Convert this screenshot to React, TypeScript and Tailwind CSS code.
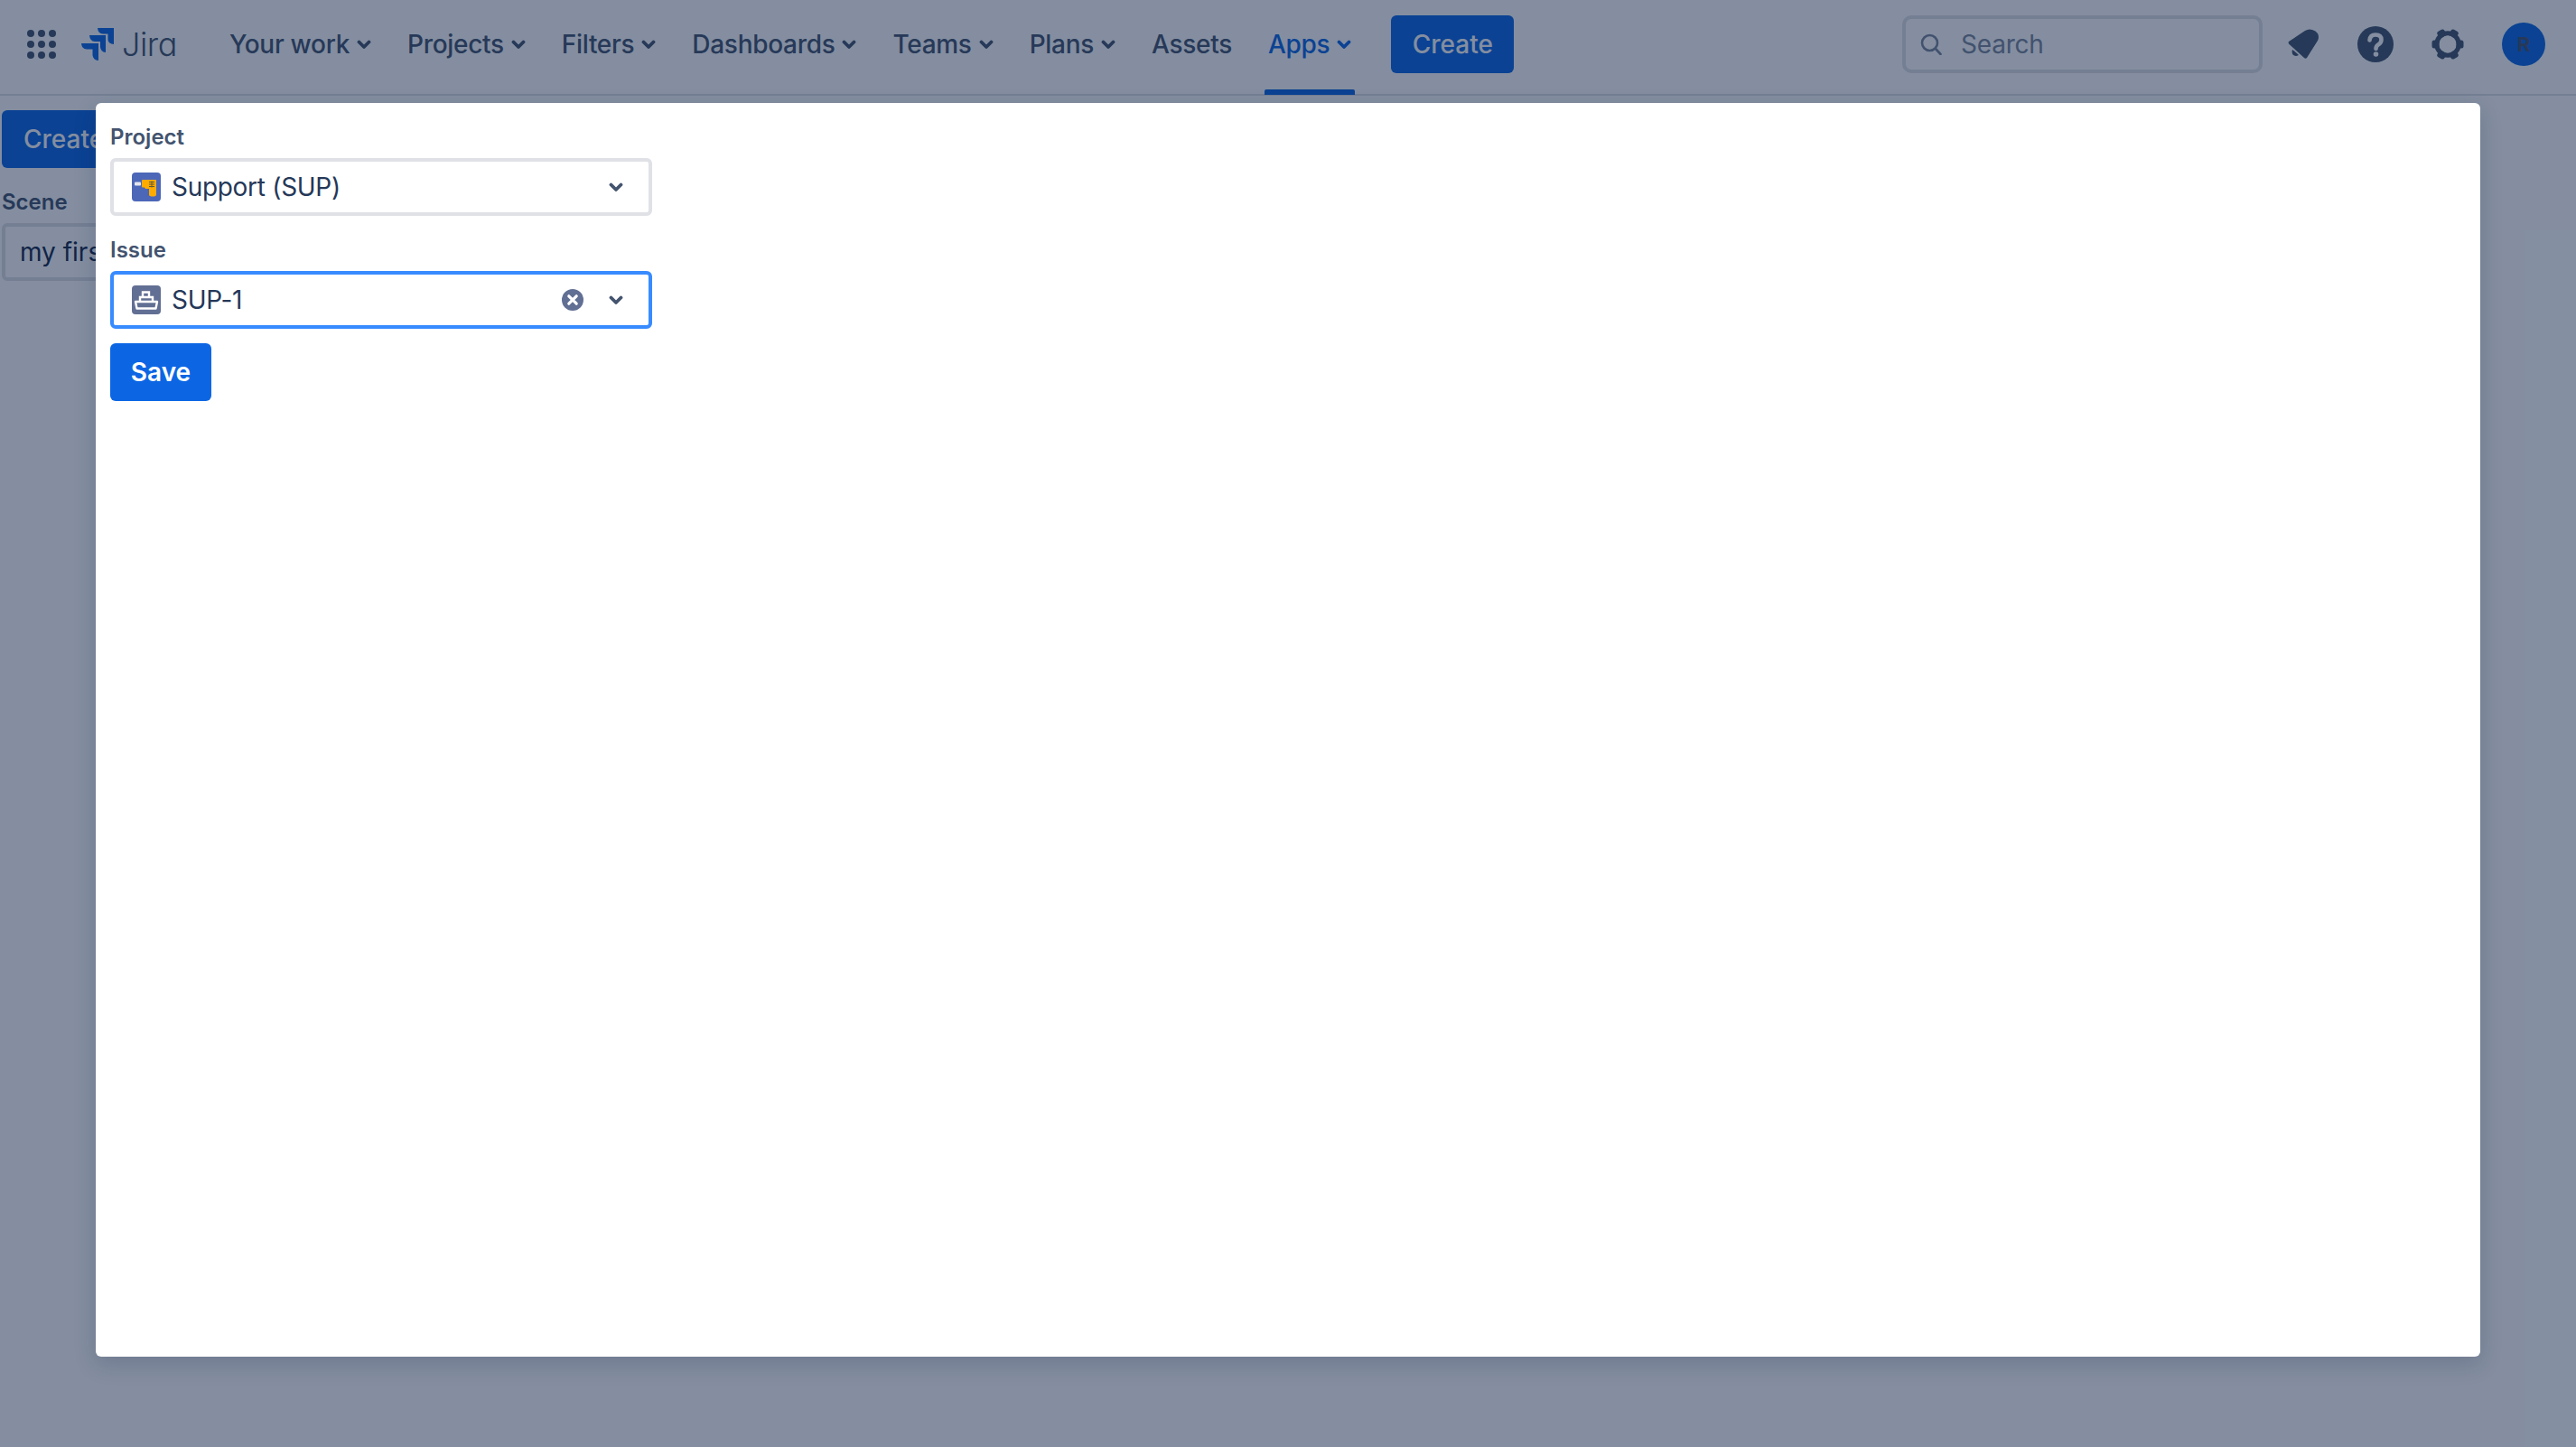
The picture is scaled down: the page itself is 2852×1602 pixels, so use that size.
import React from "react";

const Chevron = ({ className = "text-[#44546F]" }: { className?: string }) => (
  <svg width="16" height="16" viewBox="0 0 16 16" className={`shrink-0 ${className}`} fill="none">
    <path d="M2.5 5.5 L8 11 L13.5 5.5" stroke="currentColor" strokeWidth="3.8" strokeLinecap="round" strokeLinejoin="round" />
  </svg>
);

const NavItem = ({ label, chevron = true, active = false }: { label: string; chevron?: boolean; active?: boolean }) => (
  <div className={`relative flex h-full items-center gap-2 px-1 text-[28px] font-medium tracking-[-0.3px] ${active ? "text-[#0C66E4]" : "text-[#44546F]"}`}>
    <span>{label}</span>
    {chevron && <Chevron className={active ? "text-[#0C66E4]" : "text-[#44546F]"} />}
    {active && <div className="absolute -bottom-[7px] left-0 right-0 h-[6px] rounded-t-[2px] bg-[#0C66E4]" />}
  </div>
);

const Dots = () => (
  <svg width="32" height="32" viewBox="0 0 32 32" fill="#44546F">
    {[4, 16, 28].map((y) => [4, 16, 28].map((x) => <circle key={`${x}-${y}`} cx={x} cy={y} r="4" />))}
  </svg>
);

const Logo = () => (
  <svg width="36" height="36" viewBox="0 0 36 36" fill="#0C66E4">
    <path d="M18 0 H36 V18 Q30 17.5 29.5 13 V6.5 H24 Q18.5 6 18 0 Z" />
    <path d="M9 8 H27 V27 Q21.5 26.5 21 21 V15 H15 Q9.5 14.5 9 8 Z" />
    <path d="M0 17 H19 V36 Q13 35.5 12.5 30 V23.5 H6 Q0.5 23 0 17 Z" />
  </svg>
);

const Bell = () => (
  <svg width="36" height="36" viewBox="0 0 36 36" fill="#44546F">
    <path d="M2 15 L20 3 Q24 0.5 28 2 Q32 3 34 6 Q36 10 34 14 L22 33 Q20.5 34.5 19 33 L2.5 18 Q1 16.5 2 15 Z" />
    <path d="M6 24 Q10 27 13 30 Q9 32 6.5 29.5 Q5 27 6 24 Z" />
  </svg>
);

const Help = () => (
  <svg width="40" height="40" viewBox="0 0 40 40">
    <circle cx="20" cy="20" r="20" fill="#44546F" />
    <path d="M13.5 15.5 Q14 9.5 20 9.5 Q26.5 9.5 26.5 15 Q26.5 18.5 23 20.5 Q20.5 22 20.5 25" fill="none" stroke="#FFFFFF" strokeWidth="4.6" strokeLinecap="round" />
    <circle cx="20.5" cy="31" r="2.8" fill="#FFFFFF" />
  </svg>
);

const Gear = () => (
  <svg width="36" height="36" viewBox="0 0 36 36">
    <g fill="#44546F">
      {[0, 60, 120, 180, 240, 300].map((a) => (
        <rect key={a} x="13.5" y="0.5" width="9" height="8" rx="2.5" transform={`rotate(${a + 30} 18 18)`} />
      ))}
    </g>
    <circle cx="18" cy="18" r="12.2" fill="none" stroke="#44546F" strokeWidth="5" />
  </svg>
);

const ProjectIcon = () => (
  <svg width="32" height="32" viewBox="0 0 32 32" className="shrink-0">
    <rect width="32" height="32" rx="4" fill="#4C67B8" />
    <rect x="3" y="10.5" width="7" height="4" rx="1" fill="#E3E6EC" />
    <path d="M11 9 Q11 8 12 8 H27 V24.5 Q27 26.5 23 26.5 Q19 26.5 19 24.5 V18 H15 L14 16.5 H12 Q11 16.5 11 15.5 Z" fill="#FFAB00" />
    <path d="M19 10.5 H25 M19 13 H25 M19 15.5 H25 M22 9.5 V16.5" stroke="#5E5A3A" strokeWidth="1" />
  </svg>
);

const IssueIcon = () => (
  <svg width="32" height="32" viewBox="0 0 32 32" className="shrink-0">
    <rect width="32" height="32" rx="4" fill="#626F94" />
    <path d="M4 18 H28 L26.5 25.5 H5.5 Z" fill="none" stroke="#FFFFFF" strokeWidth="2.4" strokeLinejoin="round" />
    <path d="M9 18 V13 H23 V18" fill="none" stroke="#FFFFFF" strokeWidth="2.4" />
    <path d="M12 13 V7.5 H19 V13" fill="none" stroke="#FFFFFF" strokeWidth="2.4" />
  </svg>
);

const Clear = () => (
  <svg width="24" height="24" viewBox="0 0 24 24" className="shrink-0">
    <circle cx="12" cy="12" r="12" fill="#626F94" />
    <path d="M7.8 7.8 L16.2 16.2 M16.2 7.8 L7.8 16.2" stroke="#FFFFFF" strokeWidth="3.2" strokeLinecap="round" />
  </svg>
);

const Select = ({
  focused = false,
  icon,
  value,
  clearable = false,
}: {
  focused?: boolean;
  icon: React.ReactNode;
  value: string;
  clearable?: boolean;
}) => (
  <div
    className={`flex h-16 w-[600px] items-center rounded-[6px] border-4 bg-white pl-5 pr-7 ${
      focused ? "border-[#388BFF]" : "border-[#DFE1E6]"
    }`}
  >
    {icon}
    <span className="ml-3 flex-1 text-[28px] tracking-[-0.3px] text-[#253858]">{value}</span>
    {clearable && (
      <div className="mr-[28px]">
        <Clear />
      </div>
    )}
    <Chevron />
  </div>
);

const Field = ({ label, children }: { label: string; children: React.ReactNode }) => (
  <div className="mt-[22px]">
    <div className="mb-[7px] text-[24px] font-semibold leading-8 text-[#44546F]">{label}</div>
    {children}
  </div>
);

export default function App() {
  return (
    <div className="relative h-[1602px] w-[2852px] overflow-hidden bg-white font-['Inter',sans-serif]">
      <header className="flex h-[106px] items-center border-b-2 border-[#DFE1E6] pb-[6px] pl-[30px]">
        <Dots />
        <div className="ml-7">
          <Logo />
        </div>
        <span className="ml-[9px] w-[60px] text-[36px] font-light leading-none tracking-[-0.5px] text-[#44546F] [font-feature-settings:'cv11']">
          Jira
        </span>
        <nav className="ml-[55px] flex h-full items-center gap-8 self-stretch">
          <NavItem label="Your work" />
          <NavItem label="Projects" />
          <NavItem label="Filters" />
          <NavItem label="Dashboards" />
          <NavItem label="Teams" />
          <NavItem label="Plans" />
          <NavItem label="Assets" chevron={false} />
          <NavItem label="Apps" active />
        </nav>
        <button className="ml-10 h-16 w-[136px] rounded-[6px] bg-[#0C66E4] text-[28px] font-medium text-white">Create</button>
        <div className="ml-auto flex h-16 w-[399px] items-center rounded-[10px] border-4 border-[#DFE1E6] bg-white pl-4">
          <svg width="24" height="24" viewBox="0 0 24 24" fill="none" stroke="#7A869A" strokeWidth="2.6" strokeLinecap="round">
            <circle cx="10.5" cy="10.5" r="8.5" />
            <path d="M17 17 L22.5 23" />
          </svg>
          <span className="ml-[21px] text-[28px] tracking-[-0.2px] text-[#7A869A]">Search</span>
        </div>
        <div className="ml-[5px] flex items-center">
          <div className="flex w-20 justify-center"><Bell /></div>
          <div className="flex w-20 justify-center"><Help /></div>
          <div className="flex w-20 justify-center"><Gear /></div>
        </div>
        <div className="flex w-[88px] justify-center">
          <div className="flex h-12 w-12 items-center justify-center rounded-full bg-[#0C66E4] text-[22px] font-bold text-[#44546F]">R</div>
        </div>
        <div className="w-[14px]" />
      </header>

      <main className="pl-[2px] pt-4">
        <button className="h-16 w-[200px] rounded-[6px] bg-[#0C66E4] pl-6 text-left text-[28px] font-medium text-white">Create</button>
        <div className="mt-[22px] text-[24px] font-semibold leading-8 text-[#44546F]">Scene</div>
        <div className="mt-[7px] flex h-16 w-[400px] items-center rounded-[6px] border-4 border-[#DFE1E6] pl-4 text-[28px] text-[#172B4D]">my first scene</div>
      </main>

      <div className="absolute inset-0 bg-[#091E42]/50" />

      <div className="absolute left-[106px] top-[114px] h-[1388px] w-[2640px] rounded-[6px] bg-white px-4 shadow-[0_8px_24px_rgba(9,30,66,0.18)]">
        <Field label="Project">
          <Select icon={<ProjectIcon />} value="Support (SUP)" />
        </Field>
        <Field label="Issue">
          <Select focused icon={<IssueIcon />} value="SUP-1" clearable />
        </Field>
        <button className="mt-4 h-16 w-28 rounded-[6px] bg-[#0C66E4] text-[28px] font-semibold text-white">Save</button>
      </div>
    </div>
  );
}
